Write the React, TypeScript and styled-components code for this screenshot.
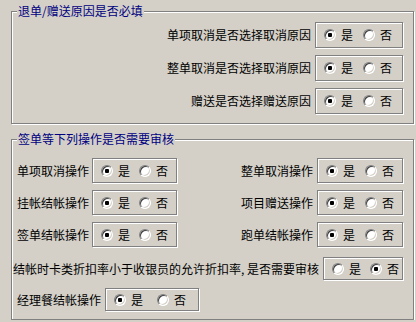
import React from "react";
import styled, { createGlobalStyle } from "styled-components";

const GlobalStyle = createGlobalStyle`
  html, body {
    margin: 0;
    background: #d4d0c8;
  }
  body {
    font-family: "Noto Sans CJK SC", "Liberation Sans", sans-serif;
    font-size: 12px;
    line-height: 14px;
    color: #000;
  }
`;

type Choice = "yes" | "no";

interface ChoiceProps {
  readonly name: string;
  readonly value: Choice;
  readonly width: number;
  readonly height: number;
  readonly spread?: number;
}

function YesNo({ name, value, width, height, spread = 10 }: ChoiceProps) {
  return (
    <ChoiceBox $width={width} $height={height} $spread={spread}>
      <Option>
        <Radio type="radio" name={name} defaultChecked={value === "yes"} />
        是
      </Option>
      <Option>
        <Radio type="radio" name={name} defaultChecked={value === "no"} />
        否
      </Option>
    </ChoiceBox>
  );
}

export default function App() {
  return (
    <>
      <GlobalStyle />
      <Page>
        <Group $bottom={9}>
          <Title>退单/赠送原因是否必填</Title>
          <ReasonList>
            <RightRow>
              <Label>单项取消是否选择取消原因</Label>
              <YesNo name="r1" value="yes" width={88} height={26} />
            </RightRow>
            <RightRow>
              <Label>整单取消是否选择取消原因</Label>
              <YesNo name="r2" value="yes" width={88} height={26} />
            </RightRow>
            <RightRow>
              <Label>赠送是否选择赠送原因</Label>
              <YesNo name="r3" value="yes" width={88} height={26} />
            </RightRow>
          </ReasonList>
        </Group>

        <Group $bottom={8}>
          <Title>签单等下列操作是否需要审核</Title>
          <AuditGrid>
            <LeftRow>
              <Label>单项取消操作</Label>
              <YesNo name="a1" value="yes" width={85} height={25} spread={9} />
            </LeftRow>
            <RightRow>
              <Label>整单取消操作</Label>
              <YesNo name="a2" value="yes" width={86} height={25} />
            </RightRow>
            <LeftRow>
              <Label>挂帐结帐操作</Label>
              <YesNo name="a3" value="yes" width={85} height={25} spread={9} />
            </LeftRow>
            <RightRow>
              <Label>项目赠送操作</Label>
              <YesNo name="a4" value="yes" width={86} height={25} />
            </RightRow>
            <LeftRow>
              <Label>签单结帐操作</Label>
              <YesNo name="a5" value="yes" width={85} height={25} spread={9} />
            </LeftRow>
            <RightRow>
              <Label>跑单结帐操作</Label>
              <YesNo name="a6" value="yes" width={86} height={25} />
            </RightRow>
          </AuditGrid>
          <DiscountRow>
            <Label>结帐时卡类折扣率小于收银员的允许折扣率, 是否需要审核</Label>
            <YesNo name="a7" value="no" width={80} height={23} spread={9} />
          </DiscountRow>
          <ManagerRow>
            <Label>经理餐结帐操作</Label>
            <YesNo name="a8" value="yes" width={94} height={23} spread={14} />
          </ManagerRow>
        </Group>
      </Page>
    </>
  );
}

const Page = styled.div`
  display: flex;
  flex-direction: column;
  gap: 15px;
  padding: 11px 0 0 11px;
`;

const Group = styled.section<{ $bottom: number }>`
  display: flex;
  flex-direction: column;
  box-sizing: border-box;
  width: 403px;
  border: 1px solid #808080;
  box-shadow: inset 1px 1px 0 #fff, 1px 1px 0 #fff;
  padding: 0 0 ${(p) => p.$bottom}px 0;
`;

const Title = styled.h2`
  align-self: flex-start;
  margin: -8px 0 0 5px;
  padding: 0 1px;
  background: #d4d0c8;
  color: #000080;
  font-size: 12px;
  font-weight: normal;
  line-height: 14px;
`;

const ReasonList = styled.div`
  display: flex;
  flex-direction: column;
  gap: 7px;
  margin-top: 4px;
  padding-right: 10px;
`;

const AuditGrid = styled.div`
  display: grid;
  grid-template-columns: 1fr 1fr;
  row-gap: 7px;
  margin-top: 12px;
  padding: 0 10px 0 5px;
`;

const RightRow = styled.div`
  display: flex;
  align-items: center;
  justify-content: flex-end;
  gap: 4px;
`;

const LeftRow = styled.div`
  display: flex;
  align-items: center;
  gap: 3px;
`;

const DiscountRow = styled(RightRow)`
  margin-top: 10px;
  padding-right: 10px;
`;

const ManagerRow = styled(LeftRow)`
  gap: 4px;
  margin-top: 8px;
  padding-left: 5px;
`;

const Label = styled.span`
  white-space: nowrap;
`;

const ChoiceBox = styled.div<{ $width: number; $height: number; $spread: number }>`
  display: flex;
  align-items: center;
  gap: ${(p) => p.$spread}px;
  box-sizing: border-box;
  width: ${(p) => p.$width}px;
  height: ${(p) => p.$height}px;
  padding-left: 8px;
  border: 1px solid #808080;
  box-shadow: inset 1px 1px 0 #fff, 1px 1px 0 #fff;
`;

const Option = styled.label`
  display: flex;
  align-items: center;
  gap: 5px;
`;

const Radio = styled.input`
  appearance: none;
  box-sizing: border-box;
  width: 12px;
  height: 12px;
  margin: 0;
  border: 1px solid;
  border-color: #808080 #fff #fff #808080;
  border-radius: 50%;
  background: #fff;
  box-shadow: inset 1px 1px 0 #404040, inset -1px -1px 0 #d4d0c8;

  &:checked {
    background: radial-gradient(circle, #000 0 2px, #fff 2.5px);
  }
`;
